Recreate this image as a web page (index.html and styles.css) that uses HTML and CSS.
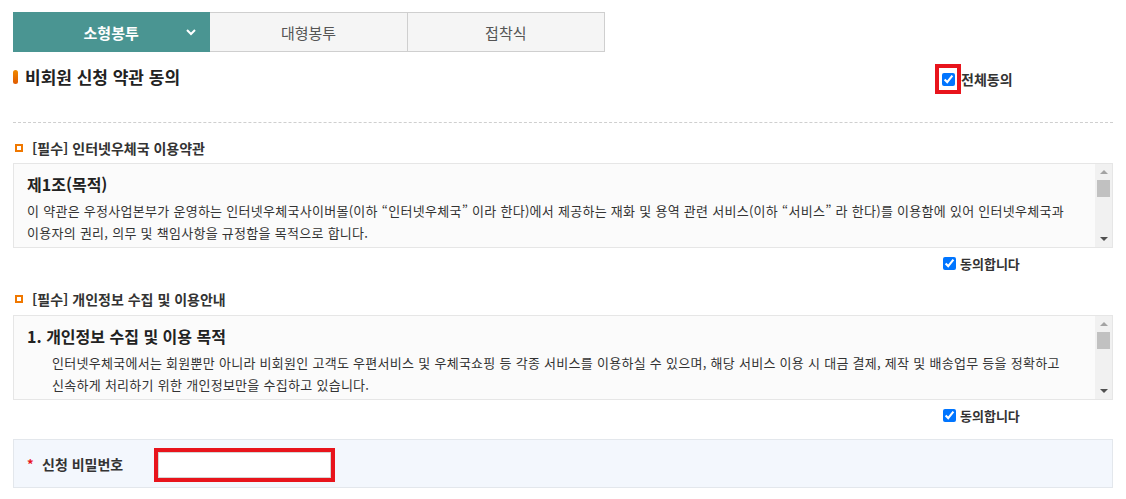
FILE: index.html
```html
<!DOCTYPE html>
<html lang="ko">
<head>
<meta charset="utf-8">
<title>비회원 신청 약관 동의</title>
<link rel="stylesheet" href="styles.css">
</head>
<body>
<div class="wrap">
  <div class="tabs">
    <div class="tab active">소형봉투
      <svg class="chev" width="10" height="7" viewBox="0 0 10 7"><polyline points="1,1 5,5 9,1" fill="none" stroke="#fff" stroke-width="2"/></svg>
    </div>
    <div class="tab">대형봉투</div>
    <div class="tab">접착식</div>
  </div>

  <div class="head">
    <h2 class="title"><span class="marker"></span>비회원 신청 약관 동의</h2>
    <label class="all-agree"><span class="hl"><input type="checkbox" checked></span>전체동의</label>
  </div>

  <div class="divider"></div>

  <h3 class="sec"><span class="sq"></span>[필수] 인터넷우체국 이용약관</h3>
  <div class="terms">
    <div class="terms-body">
      <h4 class="terms-title">제1조(목적)</h4>
      <p class="terms-text">이 약관은 우정사업본부가 운영하는 인터넷우체국사이버몰(이하 “인터넷우체국” 이라 한다)에서 제공하는 재화 및 용역 관련 서비스(이하 “서비스” 라 한다)를 이용함에 있어 인터넷우체국과 이용자의 권리, 의무 및 책임사항을 규정함을 목적으로 합니다.</p>
    </div>
    <div class="sbar"><span class="up"></span><span class="thumb"></span><span class="grow"></span><span class="down"></span></div>
  </div>
  <div class="agree"><label><input type="checkbox" checked>동의합니다</label></div>

  <h3 class="sec sec2"><span class="sq"></span>[필수] 개인정보 수집 및 이용안내</h3>
  <div class="terms">
    <div class="terms-body">
      <h4 class="terms-title">1. 개인정보 수집 및 이용 목적</h4>
      <p class="terms-text indent">인터넷우체국에서는 회원뿐만 아니라 비회원인 고객도 우편서비스 및 우체국쇼핑 등 각종 서비스를 이용하실 수 있으며, 해당 서비스 이용 시 대금 결제, 제작 및 배송업무 등을 정확하고 신속하게 처리하기 위한 개인정보만을 수집하고 있습니다.</p>
    </div>
    <div class="sbar"><span class="up"></span><span class="thumb"></span><span class="grow"></span><span class="down"></span></div>
  </div>
  <div class="agree"><label><input type="checkbox" checked>동의합니다</label></div>

  <div class="pw-row">
    <span class="req">*</span>
    <span class="pw-label">신청 비밀번호</span>
    <span class="pw-hl"><input class="pw-input" type="password"></span>
  </div>
</div>
</body>
</html>
```

FILE: styles.css
```css
* { box-sizing: border-box; }
body {
  margin: 0;
  font-family: "Noto Sans CJK KR", "Noto Sans", sans-serif;
  color: #333;
  background: #fff;
}
.wrap {
  width: 1113px;
  padding: 12px 0 0 13px;
}
.tabs {
  display: flex;
  width: 592px;
  height: 40px;
}
.tab {
  flex: 1;
  display: flex;
  align-items: center;
  justify-content: center;
  position: relative;
  background: #f5f5f5;
  border: 1px solid #cfcfcf;
  border-left: none;
  font-size: 15px;
  color: #555;
}
.tab.active {
  background: #4a9592;
  border-color: #4a9592;
  color: #fff;
  font-weight: 700;
}
.chev {
  position: absolute;
  right: 13px;
  top: 16px;
}
.head {
  display: flex;
  align-items: flex-start;
  justify-content: space-between;
  margin-top: 12px;
  height: 32px;
}
.title {
  margin: 0;
  display: flex;
  align-items: center;
  gap: 7px;
  font-size: 17px;
  font-weight: 700;
  color: #222;
  line-height: 26px;
}
.marker {
  display: inline-block;
  width: 5px;
  height: 14px;
  border-radius: 3px;
  background: linear-gradient(#f08a00, #e05a00);
}
.all-agree {
  width: 177px;
  display: flex;
  align-items: center;
  font-size: 14px;
  font-weight: 700;
  color: #333;
}
.hl {
  display: inline-flex;
  align-items: center;
  justify-content: center;
  width: 26px;
  height: 30px;
  border: 4px solid #e8141c;
  margin-left: -1px;
}
.hl input { margin: 0; width: 13px; height: 13px; }
.divider {
  margin-top: 26px;
  border-top: 1px dashed #cfcfcf;
  width: 1100px;
}
.sec {
  margin: 15px 0 5px;
  display: flex;
  align-items: center;
  gap: 9px;
  height: 20px;
  font-size: 14px;
  font-weight: 700;
  color: #333;
  padding-left: 2px;
}
.sec2 { margin-top: 16px; margin-bottom: 6px; }
.sq {
  width: 8px;
  height: 8px;
  border: 2px solid #f07800;
}
.terms {
  display: flex;
  width: 1100px;
  height: 85px;
  border: 1px solid #e6e6e6;
  background: #fbfbfb;
}
.terms-body {
  flex: 1;
  overflow: hidden;
  padding: 8px 0 0 13px;
}
.terms-title {
  margin: 0 0 4px;
  font-size: 16px;
  font-weight: 700;
  color: #222;
  line-height: 24px;
}
.terms-text {
  margin: 0;
  font-size: 13px;
  line-height: 22px;
  color: #333;
  letter-spacing: 0.28px;
  word-break: keep-all;
}
.terms-text.indent { padding-left: 25px; padding-right: 20px; }
.sbar {
  width: 17px;
  background: #f1f1f1;
  display: flex;
  flex-direction: column;
  align-items: center;
  padding: 6px 0 6px;
}
.up {
  width: 0; height: 0;
  border-left: 4px solid transparent;
  border-right: 4px solid transparent;
  border-bottom: 4px solid #a3a3a3;
}
.thumb {
  margin-top: 6px;
  width: 13px;
  height: 17px;
  background: #c1c1c1;
}
.grow { flex: 1; }
.down {
  width: 0; height: 0;
  border-left: 4px solid transparent;
  border-right: 4px solid transparent;
  border-top: 4px solid #505050;
}
.agree {
  display: flex;
  justify-content: flex-end;
  width: 1100px;
  margin-top: 5px;
  height: 20px;
}
.agree label {
  width: 170px;
  display: flex;
  align-items: center;
  font-size: 13px;
  font-weight: 700;
  color: #333;
}
.agree input { margin: 0 4px 0 0; width: 13px; height: 13px; }
.pw-row {
  margin-top: 14px;
  width: 1100px;
  height: 49px;
  display: flex;
  align-items: center;
  background: #f3f7fd;
  border: 1px solid #e3e7ec;
  padding-left: 13px;
}
.req {
  color: #e8141c;
  font-size: 13px;
  font-weight: 700;
  width: 15px;
  line-height: 14px;
}
.pw-label {
  font-size: 14px;
  font-weight: 700;
  color: #333;
  width: 112px;
}
.pw-hl {
  display: inline-flex;
  border: 4px solid #e8141c;
  width: 181px;
  height: 34px;
  margin-top: 3px;
}
.pw-input {
  flex: 1;
  width: 0;
  min-width: 0;
  margin: 0;
  border: 1px solid #d5d5d5;
  background: #fff;
  padding: 0;
}
```
